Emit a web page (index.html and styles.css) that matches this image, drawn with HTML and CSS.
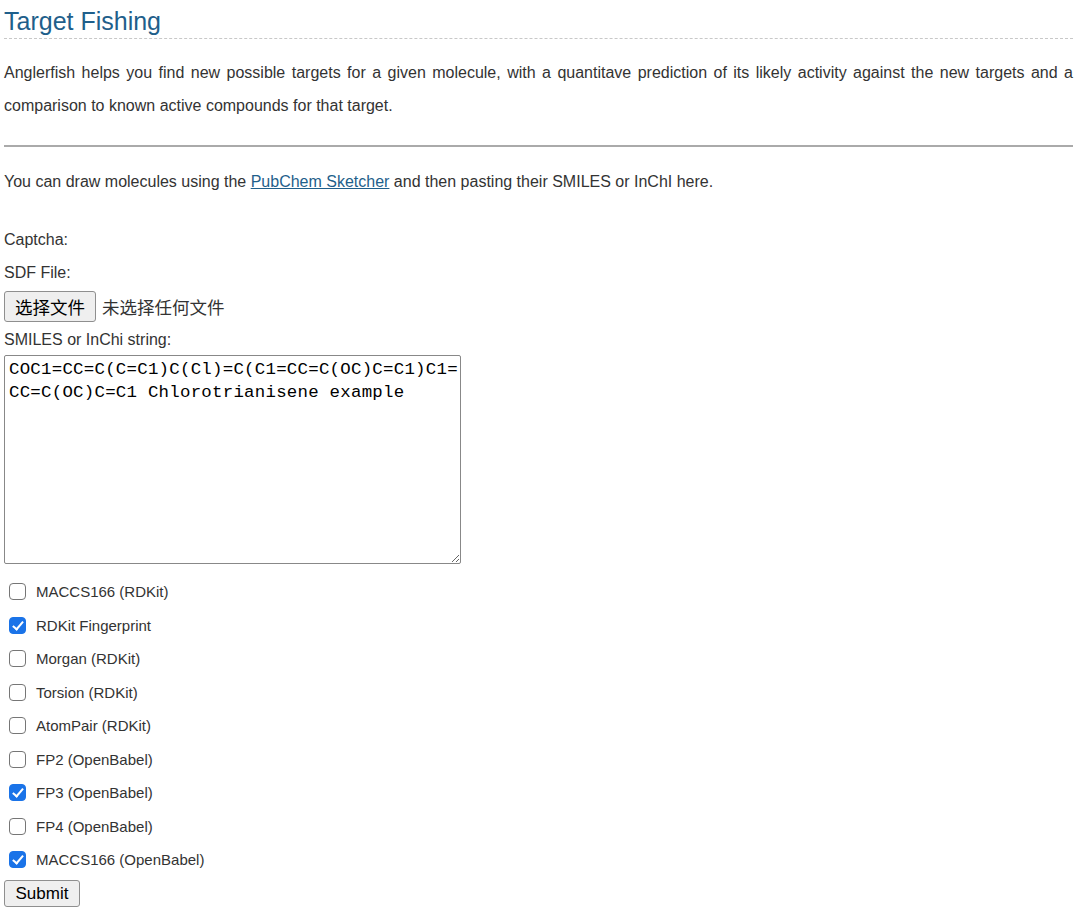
FILE: index.html
```html
<!DOCTYPE html>
<html>
<head>
<meta charset="utf-8">
<link rel="stylesheet" href="styles.css">
</head>
<body>
<div class="page">
  <h1 class="title">Target Fishing</h1>
  <p class="intro">Anglerfish helps you find new possible targets for a given molecule, with a quantitave prediction of its likely activity against the new targets and a comparison to known active compounds for that target.</p>
  <hr class="rule">
  <p class="line">You can draw molecules using the <a class="link" href="#">PubChem Sketcher</a> and then pasting their SMILES or InChI here.</p>
  <form class="form">
    <div class="label captcha">Captcha:</div>
    <div class="label">SDF File:</div>
    <div class="file-row"><span class="btn file-btn">选择文件</span><span class="file-none">未选择任何文件</span></div>
    <div class="label smiles-label">SMILES or InChi string:</div>
    <textarea class="smiles">COC1=CC=C(C=C1)C(Cl)=C(C1=CC=C(OC)C=C1)C1=CC=C(OC)C=C1 Chlorotrianisene example</textarea>
    <div class="checks">
      <label class="check"><input type="checkbox" class="box"><span>MACCS166 (RDKit)</span></label>
      <label class="check"><input type="checkbox" class="box" checked><span>RDKit Fingerprint</span></label>
      <label class="check"><input type="checkbox" class="box"><span>Morgan (RDKit)</span></label>
      <label class="check"><input type="checkbox" class="box"><span>Torsion (RDKit)</span></label>
      <label class="check"><input type="checkbox" class="box"><span>AtomPair (RDKit)</span></label>
      <label class="check"><input type="checkbox" class="box"><span>FP2 (OpenBabel)</span></label>
      <label class="check"><input type="checkbox" class="box" checked><span>FP3 (OpenBabel)</span></label>
      <label class="check"><input type="checkbox" class="box"><span>FP4 (OpenBabel)</span></label>
      <label class="check"><input type="checkbox" class="box" checked><span>MACCS166 (OpenBabel)</span></label>
    </div>
    <button type="button" class="btn submit">Submit</button>
  </form>
</div>
</body>
</html>
```
FILE: styles.css
```css
html, body {
  margin: 0;
  padding: 0;
  background: #fff;
}
.page {
  padding: 0 7px 0 4px;
  font-family: "Liberation Sans", Arial, sans-serif;
  font-size: 16px;
  color: #333;
}
.title {
  margin: 0;
  padding-top: 4px;
  height: 34px;
  line-height: 34px;
  font-size: 25px;
  font-weight: normal;
  color: #1f5f8b;
  border-bottom: 1px dashed #c8c8c8;
}
.intro {
  margin: 17px 0 0;
  line-height: 33px;
  text-align: justify;
}
.rule {
  margin: 23px 0 0;
  border: 0;
  border-top: 2px solid #aaa;
  height: 0;
}
.line {
  margin: 18px 0 0;
  line-height: 33px;
}
.link {
  color: #1f5f8b;
  text-decoration: underline;
}
.form {
  display: flex;
  flex-direction: column;
  align-items: flex-start;
}
.label {
  line-height: 33px;
}
.captcha {
  margin-top: 25px;
}
.file-row {
  display: flex;
  align-items: center;
  gap: 6px;
  height: 35px;
}
.btn {
  font-family: "Liberation Sans", "Noto Sans CJK SC", sans-serif;
  background: #efefef;
  border: 1px solid #8f8f8f;
  border-radius: 3px;
  color: #000;
  box-sizing: border-box;
}
.file-btn {
  font-family: "Noto Sans CJK SC", sans-serif;
  font-size: 17.5px;
  height: 31px;
  line-height: 29px;
  padding: 0;
  width: 92px;
  text-align: center;
}
.file-none {
  font-family: "Noto Sans CJK SC", sans-serif;
  font-size: 17.5px;
  color: #333;
}
.smiles-label {
  line-height: 31px;
}
.smiles {
  box-sizing: border-box;
  width: 457px;
  height: 209px;
  margin: 0;
  padding: 2px 0 2px 4px;
  font-family: "Liberation Mono", "Courier New", monospace;
  font-size: 17.4px;
  letter-spacing: 0.25px;
  line-height: 23px;
  color: #000;
  border: 1px solid #888;
  border-radius: 2px;
  resize: both;
}
.checks {
  margin-top: 11px;
  display: flex;
  flex-direction: column;
}
.check {
  display: flex;
  align-items: center;
  height: 33.5px;
  font-size: 15px;
}
.box {
  appearance: none;
  -webkit-appearance: none;
  box-sizing: border-box;
  width: 17px;
  height: 17px;
  margin: 0 10px 0 5px;
  border: 1.5px solid #767676;
  border-radius: 4px;
  background: #fff;
  position: relative;
}
.box:checked {
  background: #1a73e8;
  border-color: #1a73e8;
}
.box:checked::after {
  content: "";
  position: absolute;
  left: 4.5px;
  top: 1px;
  width: 4px;
  height: 9px;
  border: solid #fff;
  border-width: 0 2.5px 2.5px 0;
  transform: rotate(40deg);
}
.submit {
  margin-top: 3px;
  width: 76px;
  height: 27px;
  font-size: 17px;
  padding: 0;
  line-height: 25px;
}
```
